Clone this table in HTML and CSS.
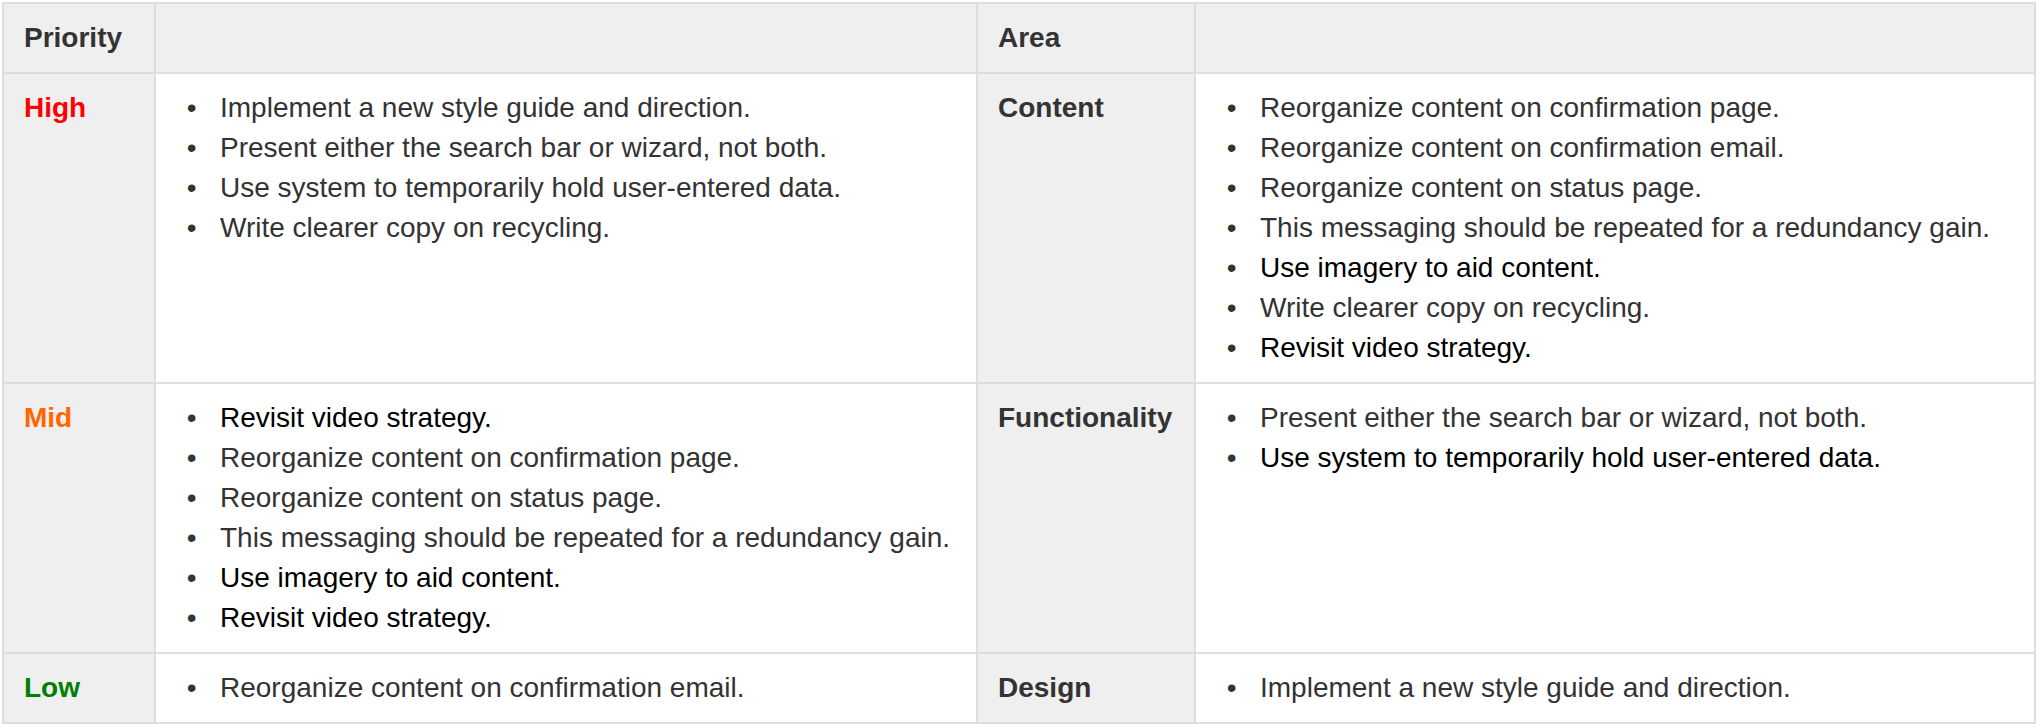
FILE: index.html
```html
<!DOCTYPE html>
<html lang="en">
<head>
<meta charset="utf-8">
<title>Priority matrix</title>
<link rel="stylesheet" href="styles.css">
</head>
<body>
<table class="matrix">
  <colgroup>
    <col class="col-priority">
    <col class="col-items">
    <col class="col-area">
    <col class="col-items-wide">
  </colgroup>
  <thead>
    <tr>
      <th class="label">Priority</th>
      <th class="label"></th>
      <th class="label">Area</th>
      <th class="label"></th>
    </tr>
  </thead>
  <tbody>
    <tr>
      <th class="label high">High</th>
      <td>
        <ul class="items">
          <li>Implement a new style guide and direction.</li>
          <li>Present either the search bar or wizard, not both.</li>
          <li>Use system to temporarily hold user-entered data.</li>
          <li>Write clearer copy on recycling.</li>
        </ul>
      </td>
      <th class="label">Content</th>
      <td>
        <ul class="items">
          <li>Reorganize content on confirmation page.</li>
          <li>Reorganize content on confirmation email.</li>
          <li>Reorganize content on status page.</li>
          <li>This messaging should be repeated for a redundancy gain.</li>
          <li class="strong">Use imagery to aid content.</li>
          <li>Write clearer copy on recycling.</li>
          <li class="strong">Revisit video strategy.</li>
        </ul>
      </td>
    </tr>
    <tr>
      <th class="label mid">Mid</th>
      <td>
        <ul class="items">
          <li class="strong">Revisit video strategy.</li>
          <li>Reorganize content on confirmation page.</li>
          <li>Reorganize content on status page.</li>
          <li>This messaging should be repeated for a redundancy gain.</li>
          <li class="strong">Use imagery to aid content.</li>
          <li class="strong">Revisit video strategy.</li>
        </ul>
      </td>
      <th class="label">Functionality</th>
      <td>
        <ul class="items">
          <li>Present either the search bar or wizard, not both.</li>
          <li class="strong">Use system to temporarily hold user-entered data.</li>
        </ul>
      </td>
    </tr>
    <tr>
      <th class="label low">Low</th>
      <td>
        <ul class="items">
          <li>Reorganize content on confirmation email.</li>
        </ul>
      </td>
      <th class="label">Design</th>
      <td>
        <ul class="items">
          <li>Implement a new style guide and direction.</li>
        </ul>
      </td>
    </tr>
  </tbody>
</table>
</body>
</html>
```
FILE: styles.css
```css
html, body {
  background: #ffffff;
}

body {
  margin: 2px 0 0 2px;
  font-family: "Liberation Sans", Arial, Helvetica, sans-serif;
  font-size: 28px;
  line-height: 40px;
  color: #333333;
}

.matrix {
  width: 2034px;
  table-layout: fixed;
  border-collapse: separate;
  border-spacing: 2px;
  background: #dddddd;
}

.col-priority { width: 150px; }
.col-items { width: 820px; }
.col-area { width: 216px; }
.col-items-wide { width: 838px; }

.matrix th,
.matrix td {
  padding: 14px 20px;
  vertical-align: top;
  text-align: left;
  background: #ffffff;
}

.matrix th.label,
.matrix thead th {
  background: #efefef;
  font-weight: bold;
  color: #333333;
}

.matrix th.high { color: #ff0000; }
.matrix th.mid { color: #ff6600; }
.matrix th.low { color: #008000; }

.items {
  margin: 0;
  padding: 0 0 0 44px;
  list-style: disc;
}

.items li {
  color: #333333;
}

.items li::marker {
  content: "\2022\00a0\00a0\00a0";
  color: #333333;
}

.items li.strong {
  color: #000000;
}
```
